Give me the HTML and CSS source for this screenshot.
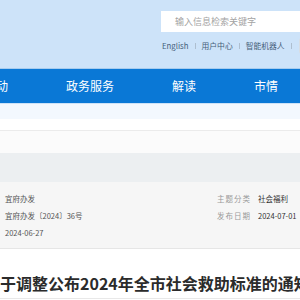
FILE: index.html
```html
<!DOCTYPE html>
<html lang="zh-CN">
<head>
<meta charset="utf-8">
<link rel="stylesheet" href="styles.css">
</head>
<body>
<div class="page">
  <header class="header">
    <div class="tools">
      <div class="search">输入信息检索关键字</div>
      <div class="links">
        <span class="link">English</span>
        <span class="sep"></span>
        <span class="link">用户中心</span>
        <span class="sep"></span>
        <span class="link">智能机器人</span>
        <span class="sep"></span>
        <span class="chip"></span>
      </div>
    </div>
  </header>
  <nav class="nav">
    <ul class="nav-list">
      <li class="nav-item">政民互动</li>
      <li class="nav-item">政务服务</li>
      <li class="nav-item">解读</li>
      <li class="nav-item">市情</li>
    </ul>
  </nav>
  <div class="band"></div>
  <div class="gap"></div>
  <div class="soft"></div>
  <div class="crumb"></div>
  <section class="meta">
    <div class="meta-left">
      <div class="row">宜府办发</div>
      <div class="row">宜府办发〔2024〕36号</div>
      <div class="row">2024-06-27</div>
    </div>
    <div class="meta-right">
      <div class="row"><span class="label">主题分类</span><span class="value">社会福利</span></div>
      <div class="row"><span class="label">发布日期</span><span class="value">2024-07-01</span></div>
    </div>
  </section>
  <div class="title-wrap">
    <h1 class="title">关于调整公布2024年全市社会救助标准的通知</h1>
  </div>
</div>
</body>
</html>
```

FILE: styles.css
```css
* { box-sizing: border-box; }
html, body { margin: 0; padding: 0; }
body {
  width: 300px;
  height: 300px;
  overflow: hidden;
  background: #fff;
  font-family: "Noto Sans CJK SC", "Noto Sans", sans-serif;
}
.page { width: 300px; overflow: hidden; }

.header {
  height: 69px;
  background: #cde3f9;
  border-bottom: 1px solid #a6ccef;
  padding: 11px 0 0 161px;
  overflow: hidden;
}
.tools { display: flex; flex-direction: column; }
.search {
  width: 160px;
  height: 21px;
  background: #fff;
  padding-left: 14px;
  font-size: 9px;
  line-height: 21px;
  color: #a3a3a3;
  white-space: nowrap;
}
.links {
  display: flex;
  align-items: center;
  height: 16px;
  margin-top: 6px;
  margin-left: 1px;
  gap: 6px;
  white-space: nowrap;
}
.links > * { flex-shrink: 0; }
.link {
  font-size: 7.8px;
  line-height: 10px;
  color: #45607a;
}
.sep {
  width: 1px;
  height: 6px;
  background: #aebfd0;
}
.chip {
  width: 20px;
  height: 16px;
  background: #d8dde3;
  border-radius: 3px;
  margin-left: 1px;
}

.nav {
  height: 34px;
  background: #0a78d6;
  overflow: hidden;
}
.nav-list {
  display: flex;
  gap: 58px;
  margin: 0 0 0 -40px;
  padding: 0;
  list-style: none;
}
.nav-item {
  font-size: 12px;
  line-height: 34px;
  color: #fff;
  white-space: nowrap;
}

.band {
  height: 16px;
  background: #f3f8fe;
  border-top: 1px solid #cde2f7;
}
.gap {
  height: 11px;
  background: #fff;
}
.soft {
  height: 23px;
  background: #fbfbfb;
  border-top: 1px solid #ebebeb;
}
.crumb {
  height: 29px;
  background: #eceff1;
}

.meta {
  display: flex;
  height: 67px;
  background: #f6f6f6;
  border-bottom: 1px solid #e6e6e6;
  padding: 8px 0 0 5px;
  font-size: 7.5px;
  line-height: 17px;
}
.meta-left {
  width: 212px;
  color: #555;
}
.meta-right .row { display: flex; white-space: nowrap; }
.meta-right .row:first-child { line-height: 16px; margin-top: 1px; }
.label {
  width: 41px;
  color: #9a9a9a;
  letter-spacing: 1px;
}
.value { color: #333; }
.row { white-space: nowrap; }

.title-wrap {
  padding: 25px 0 6px 0;
  border-bottom: 1px solid #e8e8e8;
  overflow: hidden;
}
.title {
  margin: 0 0 0 -16px;
  font-size: 16px;
  line-height: 18px;
  font-weight: 700;
  color: #2b2b2b;
  white-space: nowrap;
}
```
